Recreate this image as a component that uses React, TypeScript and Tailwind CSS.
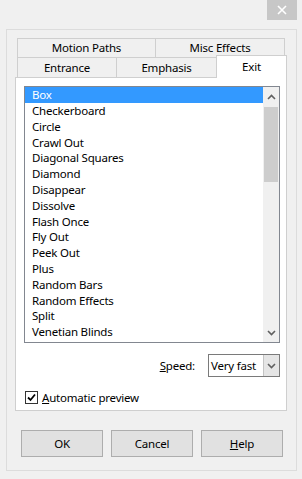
import { PropsWithChildren } from "react";

type TabProps = PropsWithChildren & { className?: string };

const effects = [
  "Box",
  "Checkerboard",
  "Circle",
  "Crawl Out",
  "Diagonal Squares",
  "Diamond",
  "Disappear",
  "Dissolve",
  "Flash Once",
  "Fly Out",
  "Peek Out",
  "Plus",
  "Random Bars",
  "Random Effects",
  "Split",
  "Venetian Blinds",
];

const Tab = ({ children, className }: TabProps) => {
  return (
    <div
      className={`flex items-center justify-center border-l border-r border-t border-[#cfcfcf] bg-[#f0f0f0] ${className ?? ""}`}
    >
      {children}
    </div>
  );
};

const Chevron = ({ up }: { up?: boolean }) => (
  <svg width="9" height="6" viewBox="0 0 9 6">
    <path
      d={up ? "M1 5 L4.5 1.5 L8 5" : "M1 1 L4.5 4.5 L8 1"}
      fill="none"
      stroke="#606060"
      strokeWidth="1.6"
    />
  </svg>
);

const DialogButton = ({ children }: PropsWithChildren) => (
  <button className="flex h-[27px] w-[82px] items-center justify-center border border-[#adadad] bg-[#e1e1e1] text-black">
    {children}
  </button>
);

export default function App() {
  return (
    <div
      className="flex h-[479px] w-[302px] flex-col bg-[#f0f0f0] text-[11.5px] tracking-[-0.2px] text-black"
      style={{ fontFamily: '"Segoe UI", "Noto Sans", sans-serif' }}
    >
      {/* title bar */}
      <div className="flex h-[29px] justify-end pr-[5px]">
        <div className="flex h-[20px] w-[30px] items-center justify-center bg-[#c7c7c7]">
          <svg width="10" height="10" viewBox="0 0 10 10">
            <path d="M1 1 L9 9 M9 1 L1 9" stroke="#fff" strokeWidth="1.6" />
          </svg>
        </div>
      </div>

      {/* frame */}
      <div className="ml-[6px] mr-[5px] flex h-[442px] flex-col border border-[#dcdcdc] pl-[8px] pt-[8px]">
        {/* tabs */}
        <div className="flex h-[19px] pl-[2px] leading-none">
          <Tab className="w-[139px]">Motion Paths</Tab>
          <Tab className="-ml-px w-[130px]">Misc Effects</Tab>
        </div>
        <div className="flex h-[20px] pl-[2px] leading-none">
          <Tab className="w-[100px]">Entrance</Tab>
          <Tab className="-ml-px w-[101px]">Emphasis</Tab>
          <div className="relative z-10 -ml-px -mt-[2px] flex h-[23px] w-[71px] items-center justify-center border-l border-r border-t border-[#cfcfcf] bg-white pb-[1px]">
            Exit
          </div>
        </div>

        {/* panel */}
        <div className="flex h-[334px] w-[272px] flex-col border border-[#cfcfcf] bg-white pl-[8px] pt-[8px]">
          {/* list box */}
          <div className="flex h-[257px] w-[256px] border border-[#828790]">
            <div className="flex-1">
              {effects.map((name, index) => (
                <div
                  key={name}
                  className={`flex h-[15.8px] items-center pl-[7px] leading-none ${
                    index === 0 ? "bg-[#3399ff] text-white" : ""
                  }`}
                >
                  {name}
                </div>
              ))}
            </div>
            <div className="flex w-[16px] flex-col bg-[#f0f0f0]">
              <div className="flex h-[20px] items-center justify-center">
                <Chevron up />
              </div>
              <div className="mx-[1px] h-[75px] bg-[#cdcdcd]" />
              <div className="flex-1" />
              <div className="flex h-[18px] items-center justify-center">
                <Chevron />
              </div>
            </div>
          </div>

          {/* speed */}
          <div className="mt-[11px] flex items-center justify-end pr-[6px]">
            <span className="mr-[13px]">
              <u>S</u>peed:
            </span>
            <div className="flex h-[23px] w-[72px] border border-[#7a7a7a] bg-white">
              <div className="flex flex-1 items-center pl-[2px]">Very fast</div>
              <div className="flex w-[16px] items-center justify-center border-l border-[#c4c4c4] bg-[#e5e5e5]">
                <Chevron />
              </div>
            </div>
          </div>

          {/* preview */}
          <div className="ml-[1px] mt-[12px] flex items-center gap-[4px]">
            <div className="flex h-[13px] w-[13px] items-center justify-center border border-[#333] bg-white">
              <svg width="9" height="9" viewBox="0 0 9 9">
                <path d="M1 4.5 L3.5 7 L8 1.5" fill="none" stroke="#000" strokeWidth="1.8" />
              </svg>
            </div>
            <span>
              <u>A</u>utomatic preview
            </span>
          </div>
        </div>

        {/* buttons */}
        <div className="mt-[19px] flex gap-[8px] pl-[6px]">
          <DialogButton>OK</DialogButton>
          <DialogButton>Cancel</DialogButton>
          <DialogButton>
            <span>
              <u>H</u>elp
            </span>
          </DialogButton>
        </div>
      </div>
    </div>
  );
}
